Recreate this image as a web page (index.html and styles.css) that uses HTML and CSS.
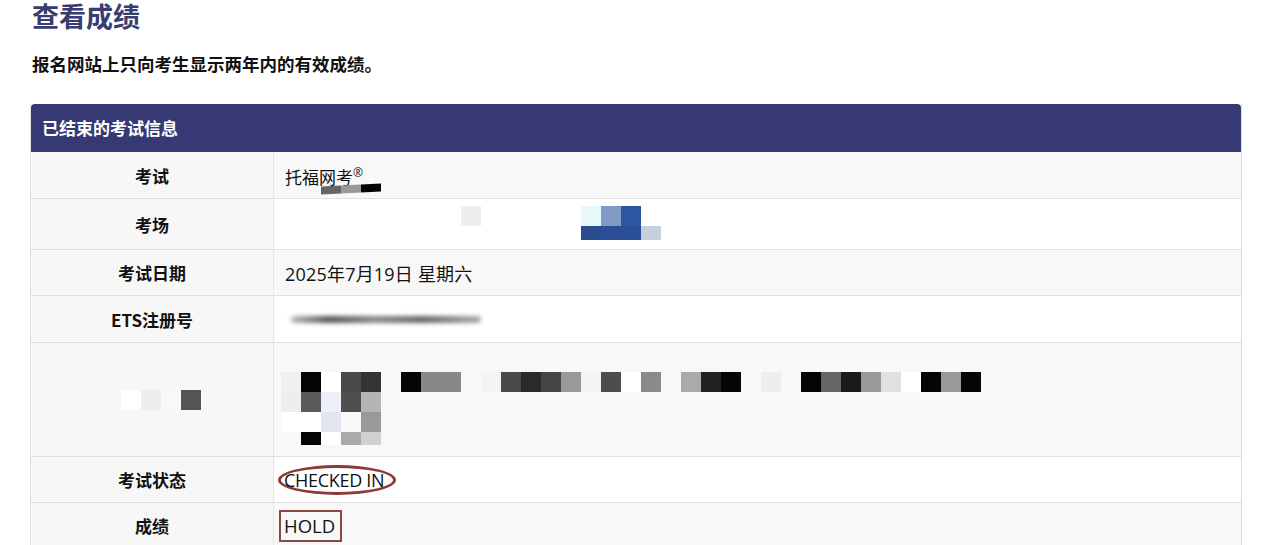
FILE: index.html
```html
<!DOCTYPE html>
<html lang="zh-CN">
<head>
<meta charset="utf-8">
<title>查看成绩</title>
<link rel="stylesheet" href="styles.css">
</head>
<body>
<div class="page">
  <h1 class="title">查看成绩</h1>
  <p class="note">报名网站上只向考生显示两年内的有效成绩。</p>

  <div class="panel">
    <div class="panel-head">已结束的考试信息</div>
    <div class="grid">
      <div class="label r1">考试</div>
      <div class="value r1 odd">
        <div class="exam">托福网考<sup>®</sup>
          <span class="mini-mosaic"><i class="c66"></i><i class="c99"></i><i class="c00"></i></span>
        </div>
      </div>

      <div class="label r2">考场</div>
      <div class="value r2 even">
        <div class="mosaic venue">
          <i class="cw"></i><i class="cw"></i><i class="cw"></i><i class="cw"></i><i class="cw"></i><i class="cw"></i><i class="cw"></i><i class="cw"></i><i class="cw"></i><i class="cee"></i><i class="cw"></i><i class="cw"></i><i class="cw"></i><i class="cw"></i><i class="cw"></i><i class="ccy"></i><i class="cb1"></i><i class="cb2"></i><i class="cw"></i><i class="cw"></i>
          <i class="cw"></i><i class="cw"></i><i class="cw"></i><i class="cw"></i><i class="cw"></i><i class="cw"></i><i class="cw"></i><i class="cw"></i><i class="cw"></i><i class="cw"></i><i class="cw"></i><i class="cw"></i><i class="cw"></i><i class="cw"></i><i class="cw"></i><i class="cb3"></i><i class="cb4"></i><i class="cb4"></i><i class="cbl"></i><i class="cw"></i>
        </div>
      </div>

      <div class="label r3">考试日期</div>
      <div class="value r3 odd date">2025年7月19日 星期六</div>

      <div class="label r4">ETS注册号</div>
      <div class="value r4 even"><span class="blurline"></span></div>

      <div class="label r5">
        <span class="mosaic lbl"><i class="cw"></i><i class="cee"></i><i class="cf8"></i><i class="c55"></i></span>
      </div>
      <div class="value r5 odd">
        <div class="mosaic big">
          <i class="cf0"></i><i class="c00"></i><i class="cw"></i><i class="c4a"></i><i class="c33"></i><i class="cf8"></i><i class="c00"></i><i class="c88"></i><i class="c88"></i><i class="cf8"></i><i class="cf3"></i><i class="c4a"></i><i class="c2a"></i><i class="c44"></i><i class="c99"></i><i class="cf3"></i><i class="c4d"></i><i class="cw"></i><i class="c8a"></i><i class="cf8"></i><i class="caa"></i><i class="c22"></i><i class="c00"></i><i class="cf8"></i><i class="cee"></i><i class="cf8"></i><i class="c00"></i><i class="c66"></i><i class="c1a"></i><i class="c99"></i><i class="ce0"></i><i class="cw"></i><i class="c00"></i><i class="c99"></i><i class="c00"></i>
        </div>
        <div class="mosaic col">
          <i class="cee"></i><i class="c5a"></i><i class="cef"></i><i class="c4f"></i><i class="cb5"></i>
          <i class="cw"></i><i class="cw"></i><i class="ce3"></i><i class="cf8"></i><i class="c99"></i>
          <i class="cf8"></i><i class="c00"></i><i class="cw"></i><i class="caa"></i><i class="cd0"></i>
        </div>
      </div>

      <div class="label r6">考试状态</div>
      <div class="value r6 even"><span class="circled">CHECKED IN</span></div>

      <div class="label r7">成绩</div>
      <div class="value r7 odd"><span class="boxed">HOLD</span></div>
    </div>
  </div>
</div>
</body>
</html>
```

FILE: styles.css
```css
* { box-sizing: border-box; }
html, body { margin: 0; padding: 0; background: #fff; }
body {
  font-family: "Noto Sans CJK SC", "Noto Sans", sans-serif;
  color: #111;
  overflow: hidden;
}
.page { padding: 0 38px 0 30px; }

.title {
  margin: 0 0 0 2px;
  font-size: 27px;
  line-height: 31px;
  font-weight: 700;
  color: #3a3c70;
}
.note {
  margin: 21px 0 0 2px;
  font-size: 17.5px;
  line-height: 24px;
  font-weight: 700;
  color: #111;
}
.panel {
  margin-top: 28px;
  border-right: 1px solid #dcdcdc;
  border-left: 1px solid #e2e2e2;
}
.panel-head {
  height: 48px;
  background: #363974;
  color: #fff;
  font-size: 17px;
  font-weight: 700;
  line-height: 48px;
  padding-left: 11px;
  border-radius: 4px 4px 0 0;
}
.grid {
  display: grid;
  grid-template-columns: 243px 1fr;
}
.label, .value {
  display: flex;
  align-items: center;
  border-bottom: 1px solid #e0e0e0;
  font-size: 17px;
}
.label {
  justify-content: center;
  font-weight: 700;
  background: #f7f7f7;
  border-right: 1px solid #e6e6e6;
  color: #111;
}
.value {
  padding-left: 11px;
  color: #111;
  font-family: "Open Sans", "Noto Sans CJK SC", sans-serif;
  font-size: 17px;
}
.value.date { font-size: 18px; letter-spacing: 0.2px; }
.odd { background: #f8f8f8; }
.even { background: #fff; }

.r1 { height: 47px; }
.r2 { height: 51px; }
.r3 { height: 46px; }
.r4 { height: 47px; }
.r5 { height: 114px; }
.r6 { height: 46px; }
.r7 { height: 46px; }

.exam { position: relative; line-height: 20px; }
.exam sup { font-size: 12px; vertical-align: 7px; }
.mini-mosaic {
  position: absolute;
  left: 36px;
  top: 22px;
  display: flex;
  transform: skewY(-3deg);
}
.mini-mosaic i { display: block; width: 20px; height: 8px; }

.mosaic i { display: block; width: 20px; height: 20px; }
.mosaic.venue {
  display: grid;
  grid-template-columns: repeat(20, 20px);
  grid-auto-rows: 20px;
  margin-left: -4px;
  margin-top: 4px;
}
.mosaic.venue i:nth-child(n+21) { height: 14px; }

.value.r5 { flex-direction: column; align-items: flex-start; justify-content: flex-start; padding-top: 29px; padding-left: 7px; }
.mosaic.big { display: flex; }
.mosaic.col {
  display: grid;
  grid-template-columns: repeat(5, 20px);
  grid-auto-rows: 20px;
}
.mosaic.col i:nth-child(n+11) { height: 13px; }
.mosaic.lbl { display: flex; margin-left: 18px; }

.blurline {
  display: block;
  width: 190px;
  height: 7px;
  margin-left: 6px;
  background: linear-gradient(90deg, #bbb, #555 20%, #888 45%, #666 70%, #aaa);
  filter: blur(2px);
  border-radius: 3px;
}

.circled {
  display: inline-block;
  font-size: 18px;
  line-height: 22px;
  padding: 1px 9px 1px 3px;
  margin-left: -7px;
  border: 3px solid #8c3a36;
  border-radius: 50%;
  letter-spacing: -0.3px;
}
.boxed {
  display: inline-block;
  font-size: 18.5px;
  line-height: 28px;
  padding: 0 5px 0 3px;
  margin-left: -6px;
  border: 2px solid #8a4a44;
}

.cw { background: #ffffff; }
.cf8 { background: #f8f8f8; }
.cf3 { background: #f3f3f3; }
.cf0 { background: #f0f0f0; }
.cef { background: #eef0f8; }
.cee { background: #eeeeee; }
.ccy { background: #e6f8f8; }
.ce3 { background: #e3e5f3; }
.ce0 { background: #e0e0e0; }
.cd0 { background: #d0d0d0; }
.cb5 { background: #b5b5b5; }
.caa { background: #aaaaaa; }
.c99 { background: #999999; }
.c8a { background: #8a8a8a; }
.c88 { background: #888888; }
.c66 { background: #666666; }
.c5a { background: #5a5a5a; }
.c55 { background: #555555; }
.c4f { background: #4f4f4f; }
.c4d { background: #4d4d4d; }
.c4a { background: #4a4a4a; }
.c44 { background: #444444; }
.c33 { background: #333333; }
.c2a { background: #2a2a2a; }
.c22 { background: #222222; }
.c1a { background: #1a1a1a; }
.c00 { background: #050505; }
.cb1 { background: #7f9bc5; }
.cb2 { background: #2d56a0; }
.cb3 { background: #2b4b8f; }
.cb4 { background: #2a4f96; }
.cbl { background: #c5d0dc; }
```
